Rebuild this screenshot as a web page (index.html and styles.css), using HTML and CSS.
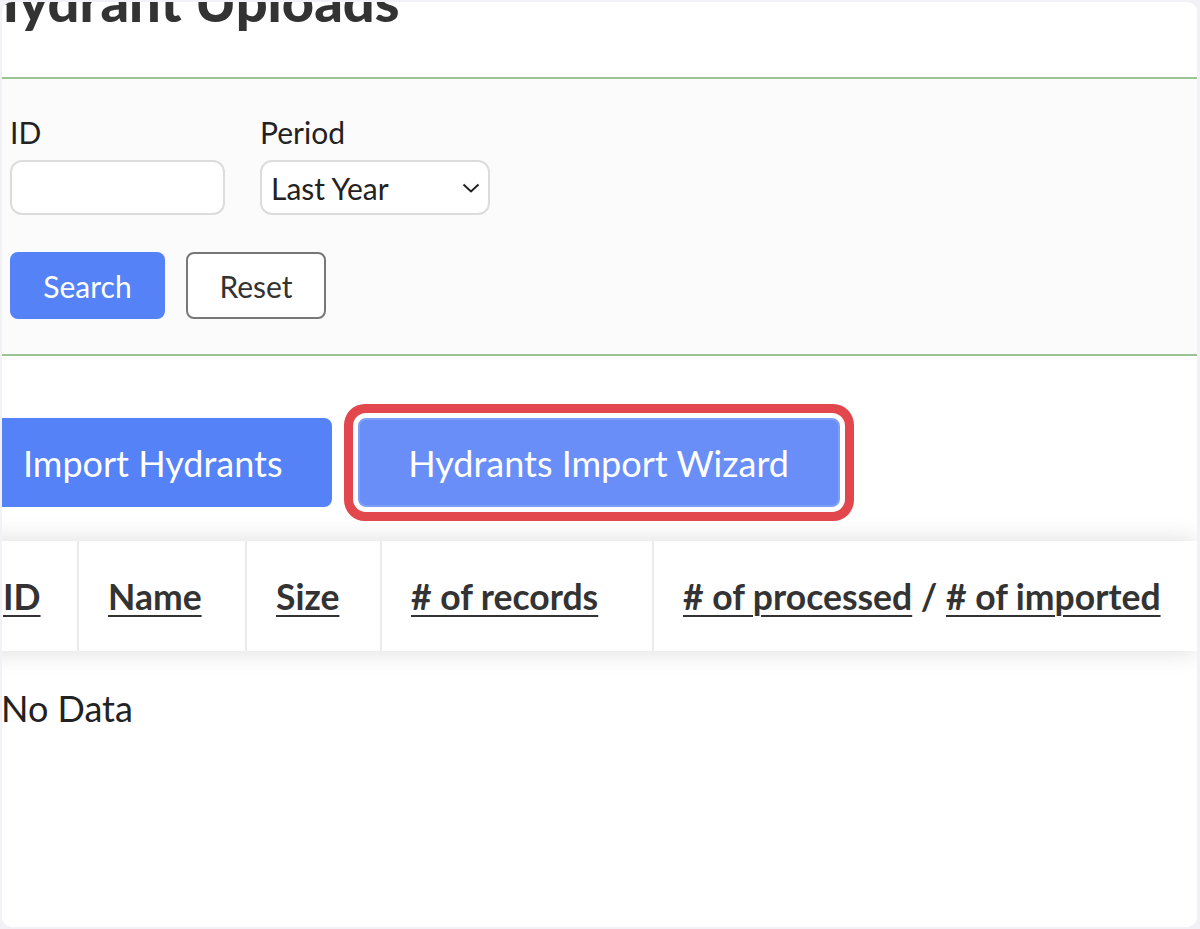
FILE: index.html
```html
<!DOCTYPE html>
<html lang="en">
<head>
  <meta charset="UTF-8" />
  <title>Hydrant Uploads</title>
  <meta name="viewport" content="width=device-width, initial-scale=1" />
  <link rel="stylesheet" href="styles.css">
</head>
<body>
  <div class="card">
    <div class="content">
      <div class="page-header">
        <h1>Hydrant Uploads</h1>
      </div>

      <form class="filters">
        <div class="filter-row">
          <div class="field">
            <label for="filterId">ID</label>
            <input type="text" id="filterId" class="field-id" />
          </div>
          <div class="field">
            <label for="filterPeriod">Period</label>
            <div class="select-wrap">
              <select id="filterPeriod">
                <option>Last Year</option>
                <option>Last Month</option>
                <option>All</option>
              </select>
              <svg class="chevron" width="18" height="10" viewBox="0 0 18 10">
                <path d="M1.5 1.5 L9 8.5 L16.5 1.5" fill="none" stroke="#222" stroke-width="2" />
              </svg>
            </div>
          </div>
        </div>
        <div class="filter-buttons">
          <button type="button" class="btn btn-primary btn-search">Search</button>
          <button type="reset" class="btn btn-outline btn-reset">Reset</button>
        </div>
      </form>

      <div class="actions">
        <button class="btn-big">Import Hydrants</button>
        <button class="btn-big btn-wizard">Hydrants Import Wizard</button>
      </div>

      <table class="uploads">
        <colgroup>
          <col class="col-id">
          <col class="col-name">
          <col class="col-size">
          <col class="col-records">
          <col>
        </colgroup>
        <thead>
          <tr>
            <th><a href="#">ID</a></th>
            <th><a href="#">Name</a></th>
            <th><a href="#">Size</a></th>
            <th><a href="#"># of records</a></th>
            <th><a href="#"># of processed</a> / <a href="#"># of imported</a></th>
          </tr>
        </thead>
      </table>

      <p class="empty">No Data</p>
    </div>
  </div>
</body>
</html>
```

FILE: styles.css
```css
body {
  font-family: Lato, "Open Sans", Arial, sans-serif;
  background: #f2f2f6;
  margin: 0;
  padding: 0;
  color: #222;
}

.card {
  margin: 2px 3px 2px 2px;
  height: 925px;
  background: white;
  border-radius: 10px;
  overflow: hidden;
}

.content {
  margin-left: -28px;
}

.page-header {
  display: flow-root;
  height: 75px;
}

.page-header h1 {
  margin: -29px 0 0 2px;
  font-size: 56px;
  line-height: 1;
  font-weight: 900;
  color: #333;
}

.filters {
  background: #fbfbfb;
  border-top: 2px solid #9cc492;
  border-bottom: 2px solid #9cc492;
  padding: 35px 0 35px 36px;
}

.filter-row {
  display: flex;
  gap: 35px;
}

.field label {
  display: block;
  font-size: 30px;
  line-height: 1.2;
  margin-bottom: 10px;
}

.field input,
.field select {
  box-sizing: border-box;
  height: 55px;
  border: 2px solid #dcdcdc;
  border-radius: 12px;
  background: white;
  font-family: inherit;
  font-size: 30px;
  color: #222;
}

.field-id {
  width: 215px;
}

.select-wrap {
  position: relative;
}

.field select {
  width: 230px;
  padding: 0 9px;
  appearance: none;
  -webkit-appearance: none;
}

.chevron {
  position: absolute;
  right: 10px;
  top: 23px;
}

.filter-buttons {
  display: flex;
  gap: 21px;
  margin-top: 37px;
}

.btn {
  height: 67px;
  border-radius: 8px;
  font-family: inherit;
  font-size: 30px;
  cursor: pointer;
}

.btn-primary {
  background: #5582f6;
  border: none;
  color: white;
}

.btn-search {
  width: 155px;
}

.btn-outline {
  background: white;
  border: 2px solid #777;
  color: #333;
}

.btn-reset {
  width: 140px;
}

.actions {
  display: flex;
  gap: 26px;
  margin-top: 62px;
}

.btn-big {
  height: 89px;
  padding: 0 49px;
  background: #5582f6;
  border: none;
  border-radius: 8px;
  color: white;
  font-family: inherit;
  font-size: 36px;
  cursor: pointer;
}

.btn-wizard {
  width: 482px;
  padding: 0;
  background: #6a8ef7;
  border: 2px solid #7f9ef8;
  box-shadow: 0 0 0 5px #fff, 0 0 0 14px #e1474d;
}

.uploads {
  width: 1224px;
  margin-top: 34px;
  border-collapse: collapse;
  table-layout: fixed;
  box-shadow: 0 0 24px rgba(0, 0, 0, 0.14);
  background: white;
}

.col-id { width: 104px; }
.col-name { width: 168px; }
.col-size { width: 135px; }
.col-records { width: 272px; }

.uploads th {
  height: 110px;
  padding: 0 0 0 29px;
  text-align: left;
  font-size: 35.5px;
  font-weight: bold;
  color: #333;
  border-left: 2px solid #ebebeb;
  white-space: nowrap;
}

.uploads th:first-child {
  border-left: none;
}

.uploads th a {
  color: #333;
  text-decoration: underline;
  text-decoration-thickness: 2px;
  text-underline-offset: 5px;
}

.empty {
  margin: 36px 0 0 27px;
  font-size: 36px;
  line-height: 1.2;
}
```
